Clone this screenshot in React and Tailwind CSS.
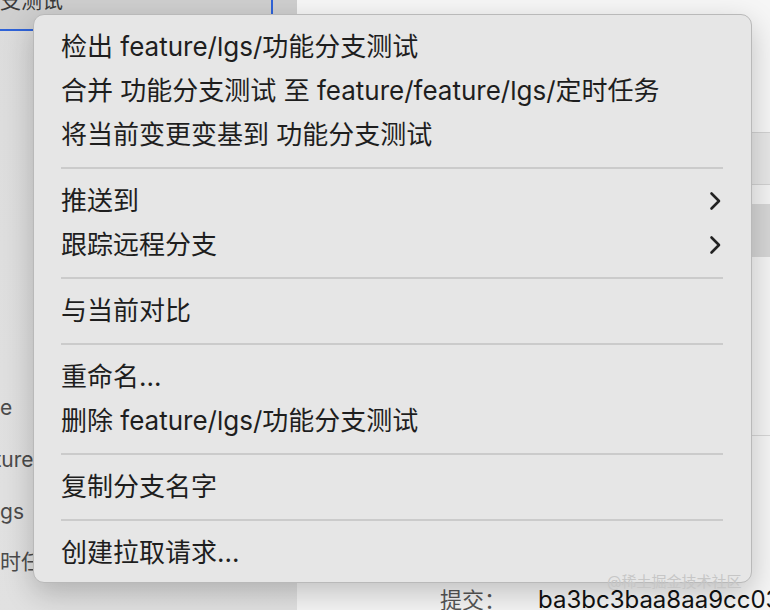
import React from 'react';

const font = { fontFamily: 'Inter, "Noto Sans CJK SC", sans-serif' };

const menuGroups = [
  [
    { label: '检出 feature/lgs/功能分支测试' },
    { label: '合并 功能分支测试 至 feature/feature/lgs/定时任务' },
    { label: '将当前变更变基到 功能分支测试' },
  ],
  [
    { label: '推送到', sub: true },
    { label: '跟踪远程分支', sub: true },
  ],
  [{ label: '与当前对比' }],
  [{ label: '重命名...' }, { label: '删除 feature/lgs/功能分支测试' }],
  [{ label: '复制分支名字' }],
  [{ label: '创建拉取请求...' }],
];

const Chevron = () => (
  <svg width="12" height="20" viewBox="0 0 12 20" fill="none">
    <polyline points="2.5,2.5 10,10 2.5,17.5" stroke="#222" strokeWidth="2.6" strokeLinecap="round" strokeLinejoin="round" />
  </svg>
);

const ContextMenu = () => (
  <div className="absolute left-[33px] top-[14px] w-[719px] rounded-[11px] border border-[#b9b9b9] bg-[#e6e6e6] pt-[10px] pb-[7px] shadow-[0_10px_30px_rgba(0,0,0,0.22)]">
    {menuGroups.map((group, gi) => (
      <div key={gi}>
        {gi > 0 && (
          <div className="h-[22px] flex items-center pl-[27px] pr-[28px]">
            <div className="h-[2px] w-full bg-[#cbcbcb]" />
          </div>
        )}
        {group.map((item) => (
          <div key={item.label} className="h-[44px] flex items-center justify-between pl-[27px] pr-[30px] text-[26px] leading-none text-[#1e1e1e]">
            <span>{item.label}</span>
            {item.sub && <Chevron />}
          </div>
        ))}
      </div>
    ))}
  </div>
);

const Sidebar = () => (
  <div className="w-[297px] shrink-0 h-full flex flex-col bg-gradient-to-b from-[#dcdcdc] to-[#e1e1e1] overflow-hidden text-[21px] text-[#4b4b4b]">
    <div className="h-[31px] shrink-0 bg-[#cfcfcf] flex">
      <div className="w-[273px] h-full border-r-2 border-b-2 border-[#2f63d8] overflow-hidden">
        <div className="-mt-[10px] leading-[22px] whitespace-nowrap text-[#3a3a3a]">支测试</div>
      </div>
    </div>
    <div className="pt-[351px] flex flex-col">
      <div className="h-[52px] flex items-center whitespace-nowrap">e</div>
      <div className="h-[52px] flex items-center whitespace-nowrap -ml-[37px]">feature</div>
      <div className="h-[52px] flex items-center whitespace-nowrap -ml-[5px]">lgs</div>
      <div className="h-[48px] flex items-center whitespace-nowrap">时任务</div>
    </div>
  </div>
);

const DetailPane = () => (
  <div className="flex-1 min-w-0 h-full flex flex-col bg-[#f5f5f5] overflow-hidden">
    <div className="h-[133px] shrink-0 bg-[#f6f6f6] border-b border-[#d2d2d2]" />
    <div className="h-[52px] shrink-0 bg-[#e7e7e7] border-b border-[#d2d2d2]" />
    <div className="h-[19px] shrink-0 bg-[#f3f3f3]" />
    <div className="h-[53px] shrink-0 bg-[#d6d6d6]" />
    <div className="h-[179px] shrink-0 bg-[#f4f4f4] border-b border-[#d6d6d6]" />
    <div className="flex-1 flex items-end">
      <div className="flex items-center h-[34px] -mb-[7px] whitespace-nowrap">
        <span className="pl-[143px] w-[241px] shrink-0 text-[22px] text-[#555]">提交：</span>
        <span className="text-[24px] text-[#111]">ba3bc3baa8aa9cc03</span>
      </div>
    </div>
  </div>
);

export default function App() {
  return (
    <div className="relative w-[770px] h-[610px] overflow-hidden flex" style={font}>
      <Sidebar />
      <DetailPane />
      <ContextMenu />
      <div className="absolute left-[607px] top-[573px] text-[15px] leading-[18px] text-[#c6c6c6] whitespace-nowrap">
        @稀土掘金技术社区
      </div>
    </div>
  );
}
